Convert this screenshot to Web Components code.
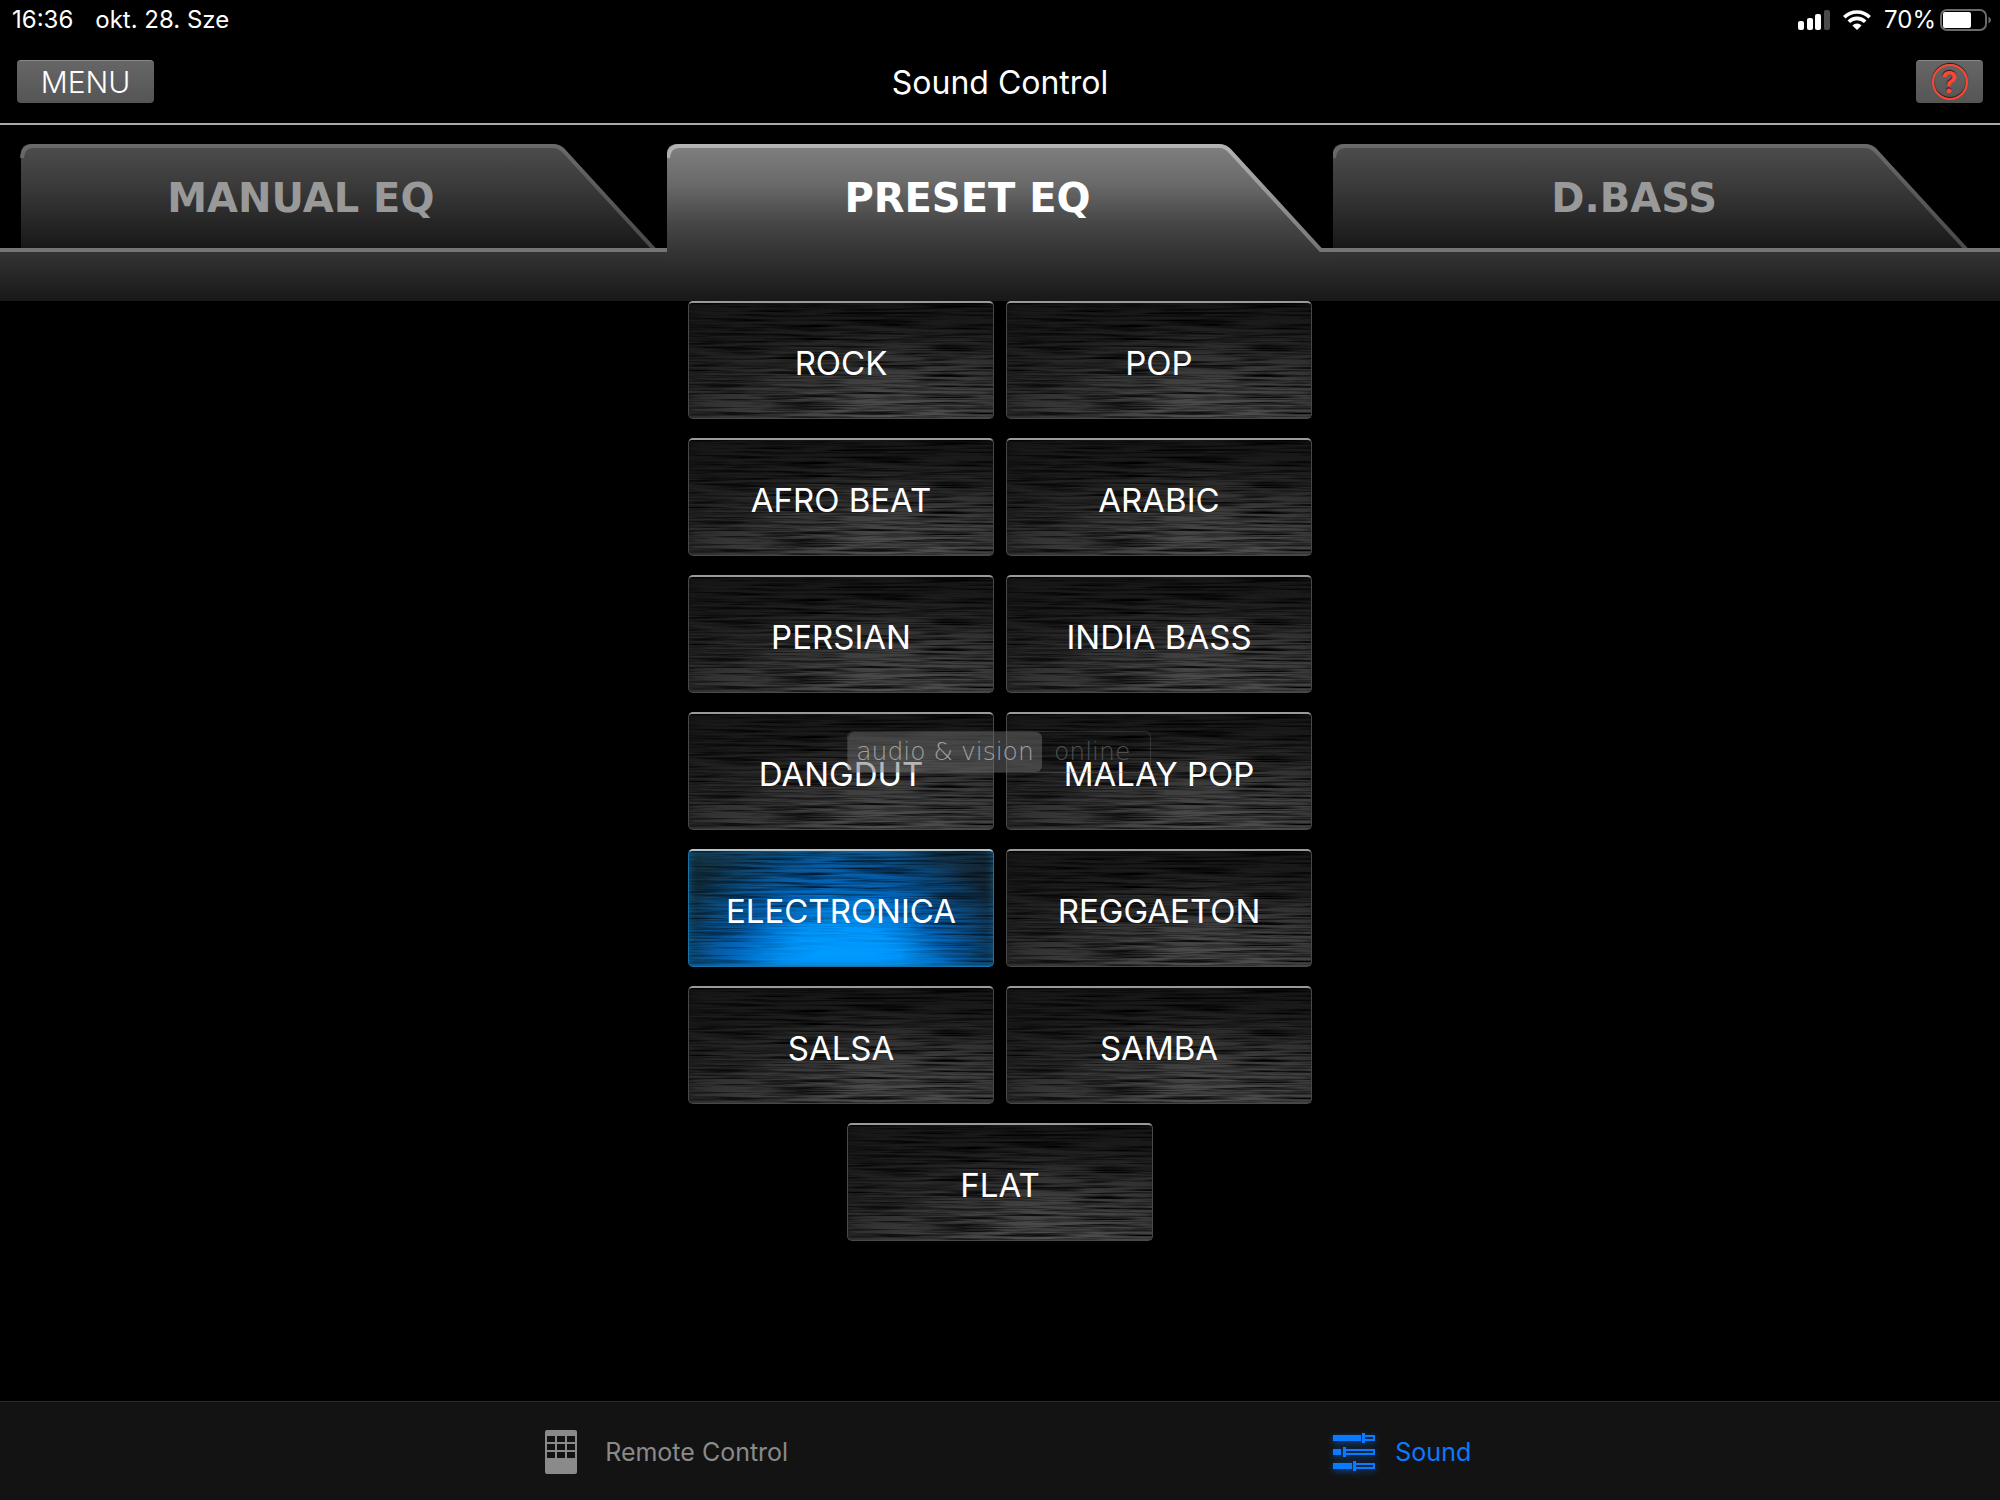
<!DOCTYPE html>
<html lang="hu">
<head>
<meta charset="utf-8">
<title>Sound Control</title>
<style>
	body{
		margin: 0;
		background: #000;
		color: #fff;
		font-family: Inter, "Liberation Sans", sans-serif;
	}
</style>
</head>
<body>
<sound-app></sound-app>

<script>
function makeTemplate(html){
	const template = document.createElement('template');
	template.innerHTML = html;
	return template;
}

const templateStatusBar = makeTemplate(`
	<style>
		:host{
			display: flex;
			justify-content: space-between;
			align-items: center;
			height: 40px;
			padding: 0 8px 0 12px;
			font-size: 24px;
			line-height: 40px;
		}
		.group{
			display: flex;
			align-items: center;
		}
		.date{
			margin-left: 22px;
		}
		svg{
			display: block;
		}
		.wifi{
			margin: 0 13px;
		}
		.battery{
			margin-left: 4px;
		}
	</style>
	<div class="group">
		<span><slot name="time"></slot></span>
		<span class="date"><slot name="date"></slot></span>
	</div>
	<div class="group">
		<svg width="32" height="20" viewBox="0 0 32 20" fill="#fff">
			<rect x="0" y="11" width="6" height="9" rx="2"/>
			<rect x="9" y="8" width="6" height="12" rx="2"/>
			<rect x="17" y="4" width="6" height="16" rx="2"/>
			<rect x="26" y="0" width="6" height="20" rx="2" fill="#4a4a4a"/>
		</svg>
		<svg class="wifi" width="28" height="20" viewBox="0 0 28 20" fill="none" stroke="#fff" stroke-width="3.6">
			<path d="M1.3 7.2A18 18 0 0 1 26.7 7.2"/>
			<path d="M5.8 11.8A11.6 11.6 0 0 1 22.2 11.8"/>
			<path d="M14 20L9.4 15.4A6.5 6.5 0 0 1 18.6 15.4Z" fill="#fff" stroke="none"/>
		</svg>
		<span><slot name="charge"></slot></span>
		<svg class="battery" width="52" height="22" viewBox="0 0 52 22">
			<rect x="1" y="1" width="45" height="20" rx="6" fill="none" stroke="#6b6b6b" stroke-width="2"/>
			<rect x="3" y="3" width="28" height="16" rx="2" fill="#fff"/>
			<path d="M48.500 7.500Q51 9 51 11T48.500 14.500Z" fill="#6b6b6b"/>
		</svg>
	</div>
`);

const templateTopBar = makeTemplate(`
	<style>
		:host{
			display: grid;
			grid-template-columns: 1fr auto 1fr;
			align-items: center;
			height: 83px;
			padding: 0 17px;
			border-bottom: 2px solid #a9a9a9;
		}
		h1{
			margin: 0;
			padding-top: 2px;
			font-size: 32px;
			line-height: 40px;
			font-weight: 400;
		}
		button{
			height: 43px;
			padding: 0;
			border: 0;
			border-top: 1px solid #8a8a8a;
			border-radius: 4px;
			background: linear-gradient(#666, #555);
			color: #fff;
			font-family: inherit;
		}
		.menu{
			width: 137px;
			font-size: 30px;
			line-height: 40px;
			font-weight: 300;
		}
		.help{
			display: grid;
			place-items: center;
			justify-self: end;
			width: 67px;
		}
		.help span{
			box-sizing: border-box;
			width: 36px;
			height: 36px;
			border: 2px solid #ff4632;
			border-radius: 50%;
			box-shadow: 0 -1px 1px #301010, inset 0 -1px 1px #301010;
			color: #ff4632;
			font-size: 30px;
			line-height: 32px;
			font-weight: 600;
			text-shadow: 0 -1px 1px #301010;
		}
	</style>
	<div><button class="menu" type="button">MENU</button></div>
	<h1><slot></slot></h1>
	<button class="help" type="button" aria-label="Help"><span>?</span></button>
`);

const templateTabBar = makeTemplate(`
	<style>
		:host{
			display: grid;
			grid-template-columns: repeat(3, 1fr);
			height: 157px;
			margin-top: 19px;
			background:
				linear-gradient(#757575, #757575) 0 104px / 100% 4px no-repeat,
				linear-gradient(#343434, #181818) 0 108px / 100% 49px no-repeat;
		}
	</style>
	<slot></slot>
`);

const activeShape = `
	<path d="M0 157V10Q0 0 10 0H553Q560 0 565 6L655 104H667V157Z" fill="url(#face)"/>
	<path d="M1 14Q2 2 12 2H552Q559 2 564 8L654 106H667" fill="none" stroke="url(#edge)" stroke-width="4"/>
`;
const idleShape = `
	<path d="M0 104V10Q0 0 10 0H533Q540 0 545 6L634 104Z" fill="url(#face)"/>
	<path d="M1 14Q2 2 12 2H532Q539 2 544 8L636 108" fill="none" stroke="url(#edge)" stroke-width="4"/>
`;

const templateTab = makeTemplate(`
	<style>
		:host{
			display: grid;
		}
		button{
			display: grid;
			height: 157px;
			padding: 0;
			border: 0;
			background: none;
			color: #999;
			font-family: "DejaVu Sans", sans-serif;
			font-size: 40px;
			line-height: 48px;
			font-weight: 700;
		}
		:host([selected]) button{
			color: #fff;
		}
		svg, span{
			grid-area: 1 / 1;
		}
		svg{
			width: 100%;
			height: 157px;
		}
		span{
			padding: 30px 65px 0 0;
		}
	</style>
	<button type="button" role="tab">
		<svg viewBox="0 0 667 157" preserveAspectRatio="none"></svg>
		<span><slot></slot></span>
	</button>
`);

const templatePreset = makeTemplate(`
	<style>
		:host{
			display: block;
			width: 306px;
		}
		button{
			display: grid;
			width: 100%;
			height: 118px;
			padding: 0;
			overflow: hidden;
			border: 1px solid #484848;
			border-top: 2px solid #9a9a9a;
			border-radius: 5px;
			background: radial-gradient(ellipse 75% 90% at 68% 105%, #525252, transparent), linear-gradient(#161616, #2e2e2e);
			color: #fff;
			font-family: inherit;
			font-size: 33px;
			line-height: 40px;
		}
		:host([selected]) button{
			border-color: #b4c4cc #1673a8 #1673a8;
			background: radial-gradient(ellipse 60% 125% at 50% 108%, #009dff 0%, #0098ff 35%, rgba(0, 110, 205, .85) 60%, transparent 100%), linear-gradient(100deg, #14303f, #0c4a7c 45%, #16222b);
			box-shadow: inset 0 0 8px #1170aa;
		}
		svg, span{
			grid-area: 1 / 1;
		}
		svg{
			width: 100%;
			height: 115px;
		}
		:host([selected]) svg{
			opacity: .7;
			mask-image: radial-gradient(ellipse 50% 80% at 50% 110%, transparent 30%, #000);
		}
		span{
			align-self: center;
			padding-top: 5px;
			z-index: 1;
		}
	</style>
	<button type="button">
		<svg aria-hidden="true">
			<!-- long horizontal noise, black with varying alpha: brushed metal -->
			<filter id="brushed" x="0" y="0" width="100%" height="100%" color-interpolation-filters="sRGB">
				<feTurbulence type="fractalNoise" baseFrequency="0.013 0.42" numOctaves="3" seed="4"/>
				<feColorMatrix values="0 0 0 0 0  0 0 0 0 0  0 0 0 0 0  2.2 0 0 0 -0.85"/>
			</filter>
			<rect width="100%" height="100%" filter="url(#brushed)"/>
		</svg>
		<span><slot></slot></span>
	</button>
`);

const templatePresetList = makeTemplate(`
	<style>
		:host{
			display: flex;
			flex-wrap: wrap;
			justify-content: center;
			align-content: flex-start;
			gap: 19px 12px;
			position: relative;
			width: 624px;
			margin: 0 auto;
		}
	</style>
	<slot></slot>
`);

// site mark laid over the preset buttons
const templateMark = makeTemplate(`
	<style>
		:host{
			display: flex;
			position: absolute;
			top: 430px;
			left: 159px;
			z-index: 2;
			box-sizing: border-box;
			width: 304px;
			height: 42px;
			border: 1px solid rgba(120, 120, 120, .3);
			border-radius: 6px;
			font-family: "DejaVu Sans Light", "DejaVu Sans", sans-serif;
			font-weight: 200;
			font-size: 25px;
			line-height: 40px;
			color: #505050;
			pointer-events: none;
			white-space: nowrap;
		}
		.name{
			width: 194px;
			border-radius: 6px;
			background: rgba(110, 110, 110, .5);
			color: #a0a0a0;
			text-align: center;
		}
		.tail{
			padding-left: 12px;
		}
	</style>
	<span class="name"><slot></slot></span>
	<span class="tail"><slot name="tail"></slot></span>
`);

const templateBottomBar = makeTemplate(`
	<style>
		:host{
			display: grid;
			grid-template-columns: 2fr 1fr;
			align-items: center;
			box-sizing: border-box;
			height: 99px;
			padding-top: 2px;
			border-top: 1px solid #2a2a2a;
			background: #131313;
		}
		a{
			display: flex;
			align-items: center;
			gap: 24px;
			color: #8a8a8a;
			font-size: 25px;
			line-height: 32px;
			text-decoration: none;
		}
		.remote{
			justify-self: center;
		}
		.sound{
			gap: 20px;
			color: #0a7aff;
		}
		.sound svg{
			filter: drop-shadow(0 2px 3px #0a4a99);
		}
	</style>
	<a class="remote" href="#remote">
		<svg width="36" height="44" viewBox="0 0 36 44">
			<rect x="0" y="0" width="32" height="44" rx="2" fill="#8a8a8a"/>
			<g fill="#131313">
				<rect x="2" y="6" width="8" height="6"/><rect x="12" y="6" width="8" height="6"/><rect x="22" y="6" width="8" height="6"/>
				<rect x="2" y="14" width="8" height="6"/><rect x="12" y="14" width="8" height="6"/><rect x="22" y="14" width="8" height="6"/>
				<rect x="2" y="22" width="8" height="6"/><rect x="12" y="22" width="8" height="6"/><rect x="22" y="22" width="8" height="6"/>
			</g>
		</svg>
		Remote Control
	</a>
	<a class="sound" href="#sound">
		<svg width="42" height="38" viewBox="0 0 42 38" fill="#0a7aff">
			<path d="M0 2H28V8H0ZM0 16H8V22H0ZM0 30H19V36H0Z"/>
			<path d="M29 0H32V10H29ZM10 14H13V24H10ZM20 28H23V38H20Z"/>
			<g fill="none" stroke="#0a7aff" stroke-width="2">
				<path d="M32 3H41V7H32M13 17H41V21H13M23 31H41V35H23"/>
			</g>
		</svg>
		Sound
	</a>
`);

const templateApp = makeTemplate(`
	<style>
		:host{
			display: flex;
			flex-direction: column;
			min-height: 100vh;
		}
		main{
			flex: 1;
		}
	</style>
	<status-bar>
		<span slot="time">16:36</span>
		<span slot="date">okt. 28. Sze</span>
		<span slot="charge">70%</span>
	</status-bar>
	<top-bar>Sound Control</top-bar>
	<tab-bar role="tablist">
		<eq-tab inset>MANUAL EQ</eq-tab>
		<eq-tab selected>PRESET EQ</eq-tab>
		<eq-tab>D.BASS</eq-tab>
	</tab-bar>
	<main>
		<preset-list>
			<preset-button>ROCK</preset-button>
			<preset-button>POP</preset-button>
			<preset-button>AFRO BEAT</preset-button>
			<preset-button>ARABIC</preset-button>
			<preset-button>PERSIAN</preset-button>
			<preset-button>INDIA BASS</preset-button>
			<preset-button>DANGDUT</preset-button>
			<preset-button>MALAY POP</preset-button>
			<preset-button selected>ELECTRONICA</preset-button>
			<preset-button>REGGAETON</preset-button>
			<preset-button>SALSA</preset-button>
			<preset-button>SAMBA</preset-button>
			<preset-button>FLAT</preset-button>
			<site-mark>audio &amp; vision<span slot="tail">online</span></site-mark>
		</preset-list>
	</main>
	<bottom-bar></bottom-bar>
`);

class BaseElement extends HTMLElement{
	constructor(template){
		super();
		this.attachShadow({mode: 'open'});
		this.shadowRoot.appendChild(template.content.cloneNode(true));
	}
}

class StatusBar extends BaseElement{
	constructor(){ super(templateStatusBar); }
}

class TopBar extends BaseElement{
	constructor(){ super(templateTopBar); }
}

class TabBar extends BaseElement{
	constructor(){ super(templateTabBar); }
}

class EqTab extends BaseElement{
	constructor(){ super(templateTab); }

	connectedCallback(){
		const selected = this.hasAttribute('selected');
		const face = selected
			? [['0', '#808080'], ['.25', '#6a6a6a'], ['.5', '#474747'], ['.69', '#343434'], ['1', '#181818']]
			: [['0', '#4e4e4e'], ['.3', '#373737'], ['.66', '#181818']];
		const edge = selected ? ['#b4b4b4', '#757575'] : ['#6a6a6a', '#484848'];
		const stops = face.map(([offset, color]) => `<stop offset="${offset}" stop-color="${color}"/>`).join('');

		this.shadowRoot.querySelector('button').setAttribute('aria-selected', selected);
		this.shadowRoot.querySelector('svg').innerHTML = `
			<defs>
				<linearGradient id="face" gradientUnits="userSpaceOnUse" x1="0" y1="0" x2="0" y2="157">${stops}</linearGradient>
				<linearGradient id="edge" gradientUnits="userSpaceOnUse" x1="0" y1="0" x2="0" y2="106">
					<stop offset="0" stop-color="${edge[0]}"/><stop offset="1" stop-color="${edge[1]}"/>
				</linearGradient>
				<clipPath id="above"><rect width="667" height="104"/></clipPath>
			</defs>
			${selected ? activeShape : `<g clip-path="url(#above)"><g transform="translate(${this.hasAttribute('inset') ? 21 : 0} 0)">${idleShape}</g></g>`}
		`;
	}
}

class PresetButton extends BaseElement{
	constructor(){ super(templatePreset); }

	connectedCallback(){
		this.shadowRoot.querySelector('button').addEventListener('click', () => this.select());
	}

	select(){
		this.parentElement.querySelectorAll('preset-button').forEach(b => b.removeAttribute('selected'));
		this.setAttribute('selected', '');
	}
}

class PresetList extends BaseElement{
	constructor(){ super(templatePresetList); }
}

class SiteMark extends BaseElement{
	constructor(){ super(templateMark); }
}

class BottomBar extends BaseElement{
	constructor(){ super(templateBottomBar); }
}

class SoundApp extends BaseElement{
	constructor(){ super(templateApp); }
}

window.customElements.define('status-bar', StatusBar);
window.customElements.define('top-bar', TopBar);
window.customElements.define('tab-bar', TabBar);
window.customElements.define('eq-tab', EqTab);
window.customElements.define('preset-button', PresetButton);
window.customElements.define('preset-list', PresetList);
window.customElements.define('site-mark', SiteMark);
window.customElements.define('bottom-bar', BottomBar);
window.customElements.define('sound-app', SoundApp);
</script>
</body>
</html>
